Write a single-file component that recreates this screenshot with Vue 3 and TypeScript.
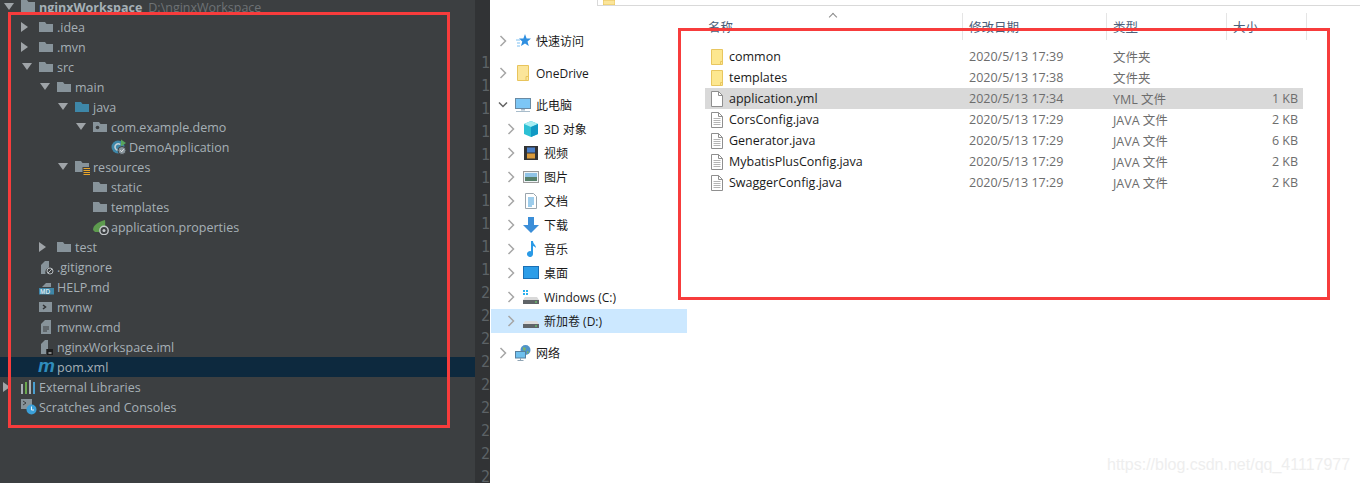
<template>
  <div class="page">
    <!-- project tree -->
    <section class="ide">
      <div class="tree">
        <div
          v-for="row in treeRows"
          :key="row.label"
          class="tree-row"
          :class="[`lvl-${row.level}`, { selected: row.selected }]"
        >
          <span class="arrow-slot">
            <svg v-if="row.arrow === 'right'" viewBox="0 0 8 12" width="8" height="12"><path d="M0 1l7 5-7 5z" fill="#9fa4a8" /></svg>
            <svg v-else-if="row.arrow === 'down'" viewBox="0 0 12 8" width="12" height="8"><path d="M1 0h10L6 7z" fill="#9fa4a8" /></svg>
          </span>
          <span class="tree-icon">
            <svg viewBox="0 0 16 16" width="16" height="16">
              <template v-if="row.icon === 'folder'">
                <path d="M0 3h6l1.500 2H14v8H0z" fill="#87939a" />
              </template>
              <template v-else-if="row.icon === 'root'">
                <path d="M0 1h6l1.500 2H14v10H0z" fill="#87939a" />
                <rect x="9" y="13" width="6" height="2" fill="#35a7e0" />
              </template>
              <template v-else-if="row.icon === 'java'">
                <path d="M0 3h6l1.500 2H14v8H0z" fill="#3e87a8" />
              </template>
              <template v-else-if="row.icon === 'package'">
                <path d="M0 3h6l1.500 2H14v8H0z" fill="#87939a" />
                <circle cx="4.500" cy="8.500" r="1.800" fill="#3c3f41" />
              </template>
              <template v-else-if="row.icon === 'resources'">
                <path d="M0 2h6l1.500 2H14v4H7.500v5H0z" fill="#87939a" />
                <path d="M8.500 9.500h6.500M8.500 11.500h6.500M8.500 13.500h6.500M8.500 15.500h6.500" stroke="#e8a52a" stroke-width="1" />
              </template>
              <template v-else-if="row.icon === 'spring-class'">
                <circle cx="7" cy="8" r="6.500" fill="#3e87a8" />
                <path d="M9.300 5.500A3.200 3.200 0 1 0 9.300 10.500" fill="none" stroke="#c7d1d6" stroke-width="1.400" />
                <path d="M10 0.500l5 3.500-5 3.500z" fill="#58a55c" />
                <circle cx="11" cy="11.500" r="4" fill="#87939a" stroke="#3c3f41" />
                <path d="M9.300 11.300l1.400 1.500 2-2.600" fill="none" stroke="#e6e8ea" stroke-width="1" />
              </template>
              <template v-else-if="row.icon === 'spring-props'">
                <path d="M0 11C0 6 5 3 12 1c1 6-1 11-6 12H2z" fill="#5d9b4e" />
                <circle cx="11" cy="11.500" r="4.200" fill="#3c3f41" stroke="#c4c8cb" stroke-width="1.400" />
                <circle cx="11" cy="11.500" r="1.500" fill="#c4c8cb" />
              </template>
              <template v-else-if="row.icon === 'gitignore'">
                <path d="M2 6l4-4h4v6.500A5 5 0 0 0 6.500 15H2z" fill="#87939a" />
                <circle cx="11" cy="12" r="3" fill="none" stroke="#b5babd" stroke-width="1" />
                <path d="M9 14l4-4" stroke="#b5babd" stroke-width="1" />
              </template>
              <template v-else-if="row.icon === 'md'">
                <path d="M3 8l4-4h5v4z" fill="#87939a" />
                <rect x="0" y="9" width="15" height="6.500" fill="#3e87a8" />
                <text x="1" y="14.500" class="md-text">MD</text>
              </template>
              <template v-else-if="row.icon === 'script'">
                <rect x="0" y="3" width="13" height="10" fill="#87939a" />
                <path d="M4 6l2.500 2L4 10" fill="none" stroke="#2f3133" stroke-width="1.500" />
              </template>
              <template v-else-if="row.icon === 'cmd'">
                <path d="M2 5l4-4h6v14H2z" fill="#87939a" />
                <path d="M4 8h6M4 10h6M4 12h4" stroke="#3c3f41" stroke-width="1" />
              </template>
              <template v-else-if="row.icon === 'iml'">
                <path d="M2 5l4-4h3v9H7v5H2z" fill="#87939a" />
                <rect x="8" y="10" width="6" height="6" fill="#1d1e1f" />
                <rect x="9.500" y="13.500" width="3" height="1" fill="#eee" />
              </template>
            </svg>
            <span v-if="row.icon === 'maven'" class="maven">m</span>
            <svg v-if="row.icon === 'libs'" class="icon-over" viewBox="0 0 16 16" width="16" height="16">
              <path d="M0 5h2v10H0z" fill="#a9b0b5" />
              <path d="M4 3h2v12H4z" fill="#6aa84f" />
              <path d="M8 1h2v14H8z" fill="#a9b0b5" />
              <path d="M12 3h2v12h-2z" fill="#4a9fd0" />
            </svg>
            <svg v-if="row.icon === 'scratch'" class="icon-over" viewBox="0 0 16 16" width="16" height="16">
              <rect x="0" y="0" width="11" height="10" fill="#87939a" />
              <path d="M2 2l3 2-3 2" fill="none" stroke="#3c3f41" />
              <circle cx="10.500" cy="10.500" r="5" fill="#3b9fd8" />
              <path d="M10.500 7.500v3.500h2.500" fill="none" stroke="#e9f2f7" />
            </svg>
          </span>
          <span class="tree-label" :class="{ root: row.icon === 'root' }">{{ row.label }}</span>
          <span v-if="row.path" class="tree-path">{{ row.path }}</span>
        </div>
      </div>
    </section>

    <div class="gutter">
      <span v-for="n in lineNumbers" :key="n" class="line-no">{{ n }}</span>
    </div>

    <!-- windows explorer -->
    <section class="explorer">
      <nav class="nav">
        <div
          v-for="item in navItems"
          :key="item.label"
          class="nav-row"
          :class="{ sub: item.sub, active: item.active, gap: item.gap }"
        >
          <svg class="chev" viewBox="0 0 8 12" width="8" height="12" v-if="!item.open">
            <path d="M1.500 1l5 5-5 5" fill="none" stroke="#a6a6a6" stroke-width="1.500" />
          </svg>
          <svg class="chev" viewBox="0 0 10 8" width="10" height="8" v-else>
            <path d="M1 1.500l4 4 4-4" fill="none" stroke="#636363" stroke-width="1.500" />
          </svg>
          <span class="nav-icon">
            <svg viewBox="0 0 16 16" width="16" height="16">
              <template v-if="item.icon === 'star'">
                <path d="M10 1l1.600 4.500H16l-3.500 2.900 1.300 4.600L10 10.400 6 13l1.300-4.600L4 5.500h4.400z" fill="#2f8fe0" />
                <path d="M1 7h4M2 10h3M2 13h3" stroke="#7cc0f2" stroke-width="1" />
              </template>
              <template v-else-if="item.icon === 'onedrive'">
                <path d="M2.500 0.500h11v15h-11z" fill="#fbe59a" stroke="#e8c45c" />
                <path d="M11 15.500v-4h2.500" fill="none" stroke="#e8c45c" />
              </template>
              <template v-else-if="item.icon === 'pc'">
                <rect x="0.500" y="1.500" width="15" height="10" fill="#7cc6f5" stroke="#6a8aa3" />
                <path d="M6 12h4v1.500H6zM1 14h14v1H1z" fill="#a8bccb" />
              </template>
              <template v-else-if="item.icon === 'cube'">
                <path d="M8 0l7 3v10l-7 3-7-3V3z" fill="#2cc0d4" />
                <path d="M1 3l7 3 7-3-7-3z" fill="#a9eef3" />
                <path d="M8 6l7-3v10l-7 3z" fill="#1199c4" />
              </template>
              <template v-else-if="item.icon === 'film'">
                <rect x="1" y="1" width="14" height="14" fill="#333" />
                <rect x="4" y="2.500" width="8" height="5" fill="#4a7fc9" />
                <rect x="4" y="8.500" width="8" height="5" fill="#d99a3a" />
              </template>
              <template v-else-if="item.icon === 'image'">
                <rect x="0.500" y="2.500" width="15" height="11" fill="#eef3f6" stroke="#9a9a9a" />
                <rect x="2" y="4" width="12" height="4" fill="#8fc3e6" />
                <rect x="2" y="8" width="12" height="4" fill="#56806a" />
              </template>
              <template v-else-if="item.icon === 'doc'">
                <path d="M2.500 0.500h8l3 3v12h-11z" fill="#fff" stroke="#9aa5ad" />
                <path d="M5 5h6M5 7h6M5 9h6M5 11h6M5 13h4" stroke="#3d9bd9" stroke-width="1" />
              </template>
              <template v-else-if="item.icon === 'down'">
                <path d="M5 0h6v8h5l-8 8-8-8h5z" fill="#3b8ed8" />
              </template>
              <template v-else-if="item.icon === 'music'">
                <path d="M8 0h2c0 3 3 4 3 7-1-1-2-2-3-2v8a3 3 0 1 1-2-2.800z" fill="#2a9ae6" />
              </template>
              <template v-else-if="item.icon === 'desk'">
                <rect x="0.500" y="1.500" width="15" height="12" fill="#2c9de8" stroke="#1a6fb4" />
              </template>
              <template v-else-if="item.icon === 'cdrive'">
                <path d="M0 1h2v2H0zM3 1h2v2H3zM0 4h2v2H0zM3 4h2v2H3z" fill="#2bb1ee" />
                <path d="M2 8h12l2 3v4H0v-4z" fill="#d9d9d9" />
                <rect x="0" y="11" width="16" height="4" fill="#5f6468" />
                <rect x="12" y="12.500" width="2" height="1" fill="#6be36b" />
              </template>
              <template v-else-if="item.icon === 'ddrive'">
                <path d="M2 8h12l2 3v4H0v-4z" fill="#dcdcdc" />
                <rect x="0" y="11" width="16" height="4" fill="#5f6468" />
                <rect x="12" y="12.500" width="2" height="1" fill="#6be36b" />
              </template>
              <template v-else-if="item.icon === 'network'">
                <circle cx="10.500" cy="5" r="5" fill="#4f93c9" />
                <path d="M8 2l3 1-1 3-2-1zM12 6l2 1-2 2z" fill="#7cb36a" />
                <rect x="0.500" y="6.500" width="10" height="6.500" fill="#6fc0ee" stroke="#57809f" />
                <path d="M5 13h1v2H5zM2.500 15h6v1h-6z" fill="#8fa4b4" />
              </template>
            </svg>
          </span>
          <span class="nav-label">{{ item.label }}</span>
        </div>
      </nav>

      <div class="content">
        <div class="address">
          <div class="address-box">
            <svg viewBox="0 0 12 6" width="12" height="6"><path d="M0 0h12v5H0z" fill="#fbe59a" stroke="#e8c45c" /></svg>
          </div>
        </div>

        <div class="list-head">
          <div class="col col-name">名称<span class="sort-caret"></span></div>
          <div class="col col-date">修改日期</div>
          <div class="col col-type">类型</div>
          <div class="col col-size">大小</div>
        </div>

        <div class="files">
          <div v-for="f in files" :key="f.name" class="file-row" :class="{ hot: f.hot }">
            <span class="file-name">
              <svg class="file-icon" viewBox="0 0 14 16" width="14" height="16">
                <template v-if="f.kind === 'folder'">
                  <path d="M1.500 0.500h11v15h-11z" fill="#fde78f" stroke="#e8c65f" />
                  <path d="M10.500 15.500v-3h2" fill="none" stroke="#e8c65f" />
                </template>
                <template v-else>
                  <path d="M1.500 0.500h7l4 4v11h-11z" fill="#fff" stroke="#8f8f8f" />
                  <path d="M8.500 0.500v4h4" fill="none" stroke="#8f8f8f" />
                  <path v-if="f.kind === 'java'" d="M3.500 6.500h7M3.500 8.500h7M3.500 10.500h7M3.500 12.500h7" stroke="#b5b5b5" />
                </template>
              </svg>
              {{ f.name }}
            </span>
            <span class="file-date">{{ f.date }}</span>
            <span class="file-type">{{ f.type }}</span>
            <span class="file-size">{{ f.size }}</span>
          </div>
        </div>
      </div>
    </section>

    <div class="mark mark-left"></div>
    <div class="mark mark-right"></div>
    <div class="watermark">https://blog.csdn.net/qq_41117977</div>
  </div>
</template>

<script setup lang="ts">
interface TreeRow {
  label: string
  level: number
  icon: string
  arrow?: 'right' | 'down'
  path?: string
  selected?: boolean
}

interface NavItem {
  label: string
  icon: string
  sub?: boolean
  open?: boolean
  active?: boolean
  gap?: boolean
}

const treeRows: TreeRow[] = [
  { label: 'nginxWorkspace', level: 0, icon: 'root', arrow: 'down', path: 'D:\\nginxWorkspace' },
  { label: '.idea', level: 1, icon: 'folder', arrow: 'right' },
  { label: '.mvn', level: 1, icon: 'folder', arrow: 'right' },
  { label: 'src', level: 1, icon: 'folder', arrow: 'down' },
  { label: 'main', level: 2, icon: 'folder', arrow: 'down' },
  { label: 'java', level: 3, icon: 'java', arrow: 'down' },
  { label: 'com.example.demo', level: 4, icon: 'package', arrow: 'down' },
  { label: 'DemoApplication', level: 5, icon: 'spring-class' },
  { label: 'resources', level: 3, icon: 'resources', arrow: 'down' },
  { label: 'static', level: 4, icon: 'folder' },
  { label: 'templates', level: 4, icon: 'folder' },
  { label: 'application.properties', level: 4, icon: 'spring-props' },
  { label: 'test', level: 2, icon: 'folder', arrow: 'right' },
  { label: '.gitignore', level: 1, icon: 'gitignore' },
  { label: 'HELP.md', level: 1, icon: 'md' },
  { label: 'mvnw', level: 1, icon: 'script' },
  { label: 'mvnw.cmd', level: 1, icon: 'cmd' },
  { label: 'nginxWorkspace.iml', level: 1, icon: 'iml' },
  { label: 'pom.xml', level: 1, icon: 'maven', selected: true },
  { label: 'External Libraries', level: 0, icon: 'libs', arrow: 'right' },
  { label: 'Scratches and Consoles', level: 0, icon: 'scratch' },
]

const lineNumbers = Array.from({ length: 19 }, (_, i) => i + 10)

const navItems: NavItem[] = [
  { label: '快速访问', icon: 'star' },
  { label: 'OneDrive', icon: 'onedrive', gap: true },
  { label: '此电脑', icon: 'pc', open: true, gap: true },
  { label: '3D 对象', icon: 'cube', sub: true },
  { label: '视频', icon: 'film', sub: true },
  { label: '图片', icon: 'image', sub: true },
  { label: '文档', icon: 'doc', sub: true },
  { label: '下载', icon: 'down', sub: true },
  { label: '音乐', icon: 'music', sub: true },
  { label: '桌面', icon: 'desk', sub: true },
  { label: 'Windows (C:)', icon: 'cdrive', sub: true },
  { label: '新加卷 (D:)', icon: 'ddrive', sub: true, active: true },
  { label: '网络', icon: 'network', gap: true },
]

const files = [
  { name: 'common', date: '2020/5/13 17:39', type: '文件夹', size: '', kind: 'folder' },
  { name: 'templates', date: '2020/5/13 17:38', type: '文件夹', size: '', kind: 'folder' },
  { name: 'application.yml', date: '2020/5/13 17:34', type: 'YML 文件', size: '1 KB', kind: 'blank', hot: true },
  { name: 'CorsConfig.java', date: '2020/5/13 17:29', type: 'JAVA 文件', size: '2 KB', kind: 'java' },
  { name: 'Generator.java', date: '2020/5/13 17:29', type: 'JAVA 文件', size: '6 KB', kind: 'java' },
  { name: 'MybatisPlusConfig.java', date: '2020/5/13 17:29', type: 'JAVA 文件', size: '2 KB', kind: 'java' },
  { name: 'SwaggerConfig.java', date: '2020/5/13 17:29', type: 'JAVA 文件', size: '2 KB', kind: 'java' },
]
</script>

<style>
html,
body {
  margin: 0;
  overflow: hidden;
}
</style>

<style scoped>
.page {
  position: relative;
  display: flex;
  width: 1360px;
  height: 483px;
  overflow: hidden;
  font-family: "Open Sans", "Noto Sans CJK SC", sans-serif;
}

/* ---- IDE ---- */
.ide {
  width: 475px;
  flex-shrink: 0;
  background: #3c3f41;
}

.tree {
  margin-top: -3px;
}

.tree-row {
  display: flex;
  align-items: center;
  height: 20px;
  font-size: 12.5px;
  color: #a6b0b6;
  white-space: nowrap;
}

.tree-row.selected {
  background: #0d293e;
}

.lvl-0 { padding-left: 3px; }
.lvl-1 { padding-left: 21px; }
.lvl-2 { padding-left: 39px; }
.lvl-3 { padding-left: 57px; }
.lvl-4 { padding-left: 75px; }
.lvl-5 { padding-left: 93px; }

.arrow-slot {
  display: flex;
  align-items: center;
  width: 18px;
  flex-shrink: 0;
}

.tree-icon {
  position: relative;
  display: flex;
  width: 16px;
  height: 16px;
  margin-right: 2px;
  flex-shrink: 0;
}

.icon-over {
  position: absolute;
  left: 0;
  top: 0;
}

.md-text {
  font-family: "Liberation Sans", sans-serif;
  font-size: 6.500px;
  font-weight: 700;
  fill: #d5e4ec;
}

.maven {
  position: absolute;
  left: -1px;
  top: -4px;
  font-family: "Liberation Sans", sans-serif;
  font-size: 19px;
  line-height: 22px;
  font-weight: 700;
  font-style: italic;
  color: #2f8dbd;
}

.tree-label.root {
  font-weight: 700;
}

.tree-path {
  margin-left: 6px;
  color: #6e7275;
}

.gutter {
  display: flex;
  flex-direction: column;
  width: 15px;
  padding-top: 54px;
  flex-shrink: 0;
  overflow: hidden;
  background: #313335;
  box-sizing: border-box;
}

.line-no {
  height: 23px;
  padding-left: 6px;
  flex-shrink: 0;
  font-family: "DejaVu Sans Mono", monospace;
  font-size: 15px;
  line-height: 19px;
  color: #5c6266;
}

/* ---- explorer ---- */
.explorer {
  display: flex;
  flex: 1;
  background: #fff;
}

.nav {
  width: 197px;
  padding: 29px 0 0 1px;
  flex-shrink: 0;
  box-sizing: border-box;
}

.nav-row {
  position: relative;
  display: flex;
  align-items: center;
  height: 24px;
  padding-left: 7px;
  font-size: 12px;
  color: #1a1a1a;
}

.nav-row.gap {
  margin-top: 8px;
}

.nav-row.sub {
  padding-left: 15px;
}

.nav-row.active {
  background: #cce8ff;
}

.chev {
  width: 10px;
  flex-shrink: 0;
}

.nav-icon {
  display: flex;
  width: 16px;
  margin-left: 7px;
  margin-right: 5px;
  flex-shrink: 0;
}

.content {
  flex: 1;
  min-width: 0;
}

.address {
  height: 6px;
}

.address-box {
  display: flex;
  height: 5px;
  margin-left: -90px;
  padding-left: 5px;
  border-left: 1px solid #d9d9d9;
  border-bottom: 1px solid #d9d9d9;
  overflow: hidden;
}

.list-head {
  display: flex;
  height: 27px;
  margin-top: 7px;
  font-size: 12.5px;
  color: #4c607a;
}

.col {
  position: relative;
  padding: 4px 0 0 6px;
  border-right: 1px solid #e5e5e5;
  box-sizing: border-box;
}

.col-name {
  width: 276px;
  padding-left: 21px;
}

.col-date { width: 144px; }
.col-type { width: 120px; }
.col-size { width: 80px; }

.sort-caret {
  position: absolute;
  left: 143px;
  top: 1px;
  width: 5px;
  height: 5px;
  border-left: 1px solid #8a8a8a;
  border-top: 1px solid #8a8a8a;
  transform: rotate(45deg);
}

.files {
  margin-top: 6px;
  margin-left: 18px;
  width: 598px;
}

.file-row {
  display: flex;
  align-items: center;
  height: 21px;
  font-size: 12.5px;
  color: #6d6d6d;
  white-space: nowrap;
}

.file-row.hot {
  background: #d9d9d9;
}

.file-name {
  display: flex;
  align-items: center;
  width: 264px;
  padding-left: 5px;
  color: #1a1a1a;
  box-sizing: border-box;
}

.file-icon {
  margin-right: 5px;
  flex-shrink: 0;
}

.file-date {
  width: 144px;
}

.file-type {
  width: 120px;
}

.file-size {
  width: 65px;
  text-align: right;
}

/* ---- overlays ---- */
.mark {
  position: absolute;
  border: 3px solid #f73c3c;
  box-sizing: border-box;
  pointer-events: none;
}

.mark-left {
  left: 8px;
  top: 12px;
  width: 442px;
  height: 416px;
}

.mark-right {
  left: 678px;
  top: 28px;
  width: 652px;
  height: 272px;
}

.watermark {
  position: absolute;
  left: 1107px;
  top: 455px;
  font-family: "Liberation Sans", Arial, sans-serif;
  font-size: 16px;
  line-height: 20px;
  color: #eeeeee;
}
</style>
